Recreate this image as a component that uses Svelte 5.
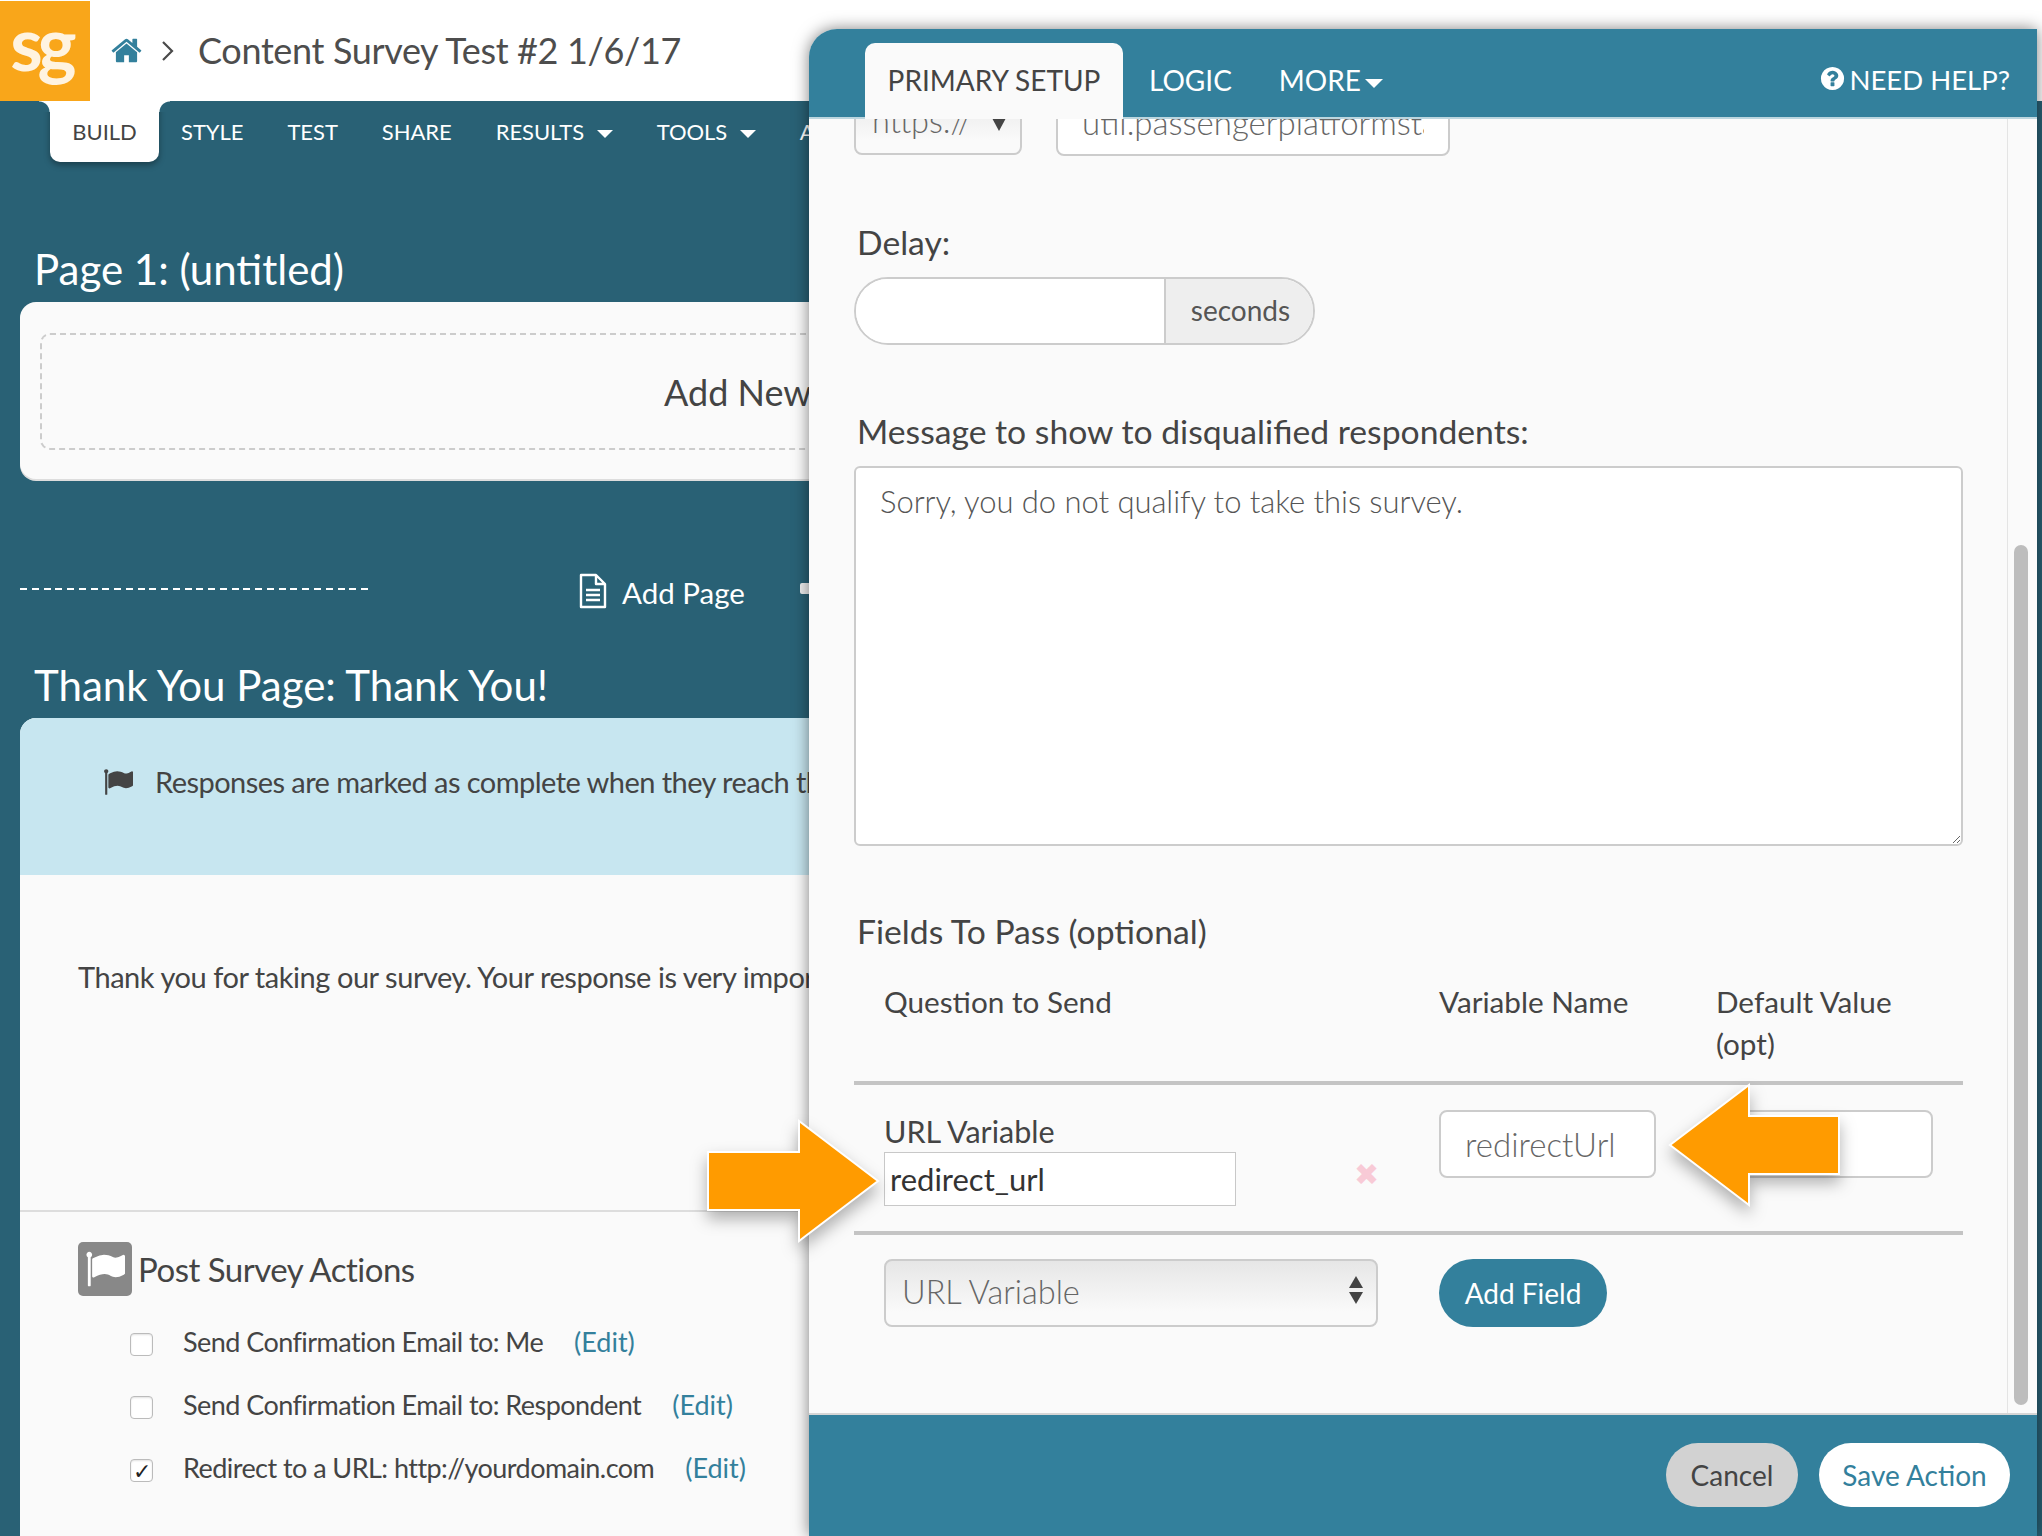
<script>
  const tabs = [
    { label: "BUILD", active: true },
    { label: "STYLE" },
    { label: "TEST" },
    { label: "SHARE" },
    { label: "RESULTS", caret: true },
    { label: "TOOLS", caret: true },
    { label: "ADVANCED" }
  ];

  const actions = [
    { label: "Send Confirmation Email to: Me", checked: false },
    { label: "Send Confirmation Email to: Respondent", checked: false },
    { label: "Redirect to a URL: http://yourdomain.com", checked: true }
  ];

  const flagPath =
    "M320 256q0 72-64 110v1266q0 13-9.500 22.500t-22.500 9.500h-64q-13 0-22.500-9.500t-9.500-22.500v-1266q-64-38-64-110 0-53 37.500-90.500t90.500-37.500 90.500 37.500 37.500 90.500zm1472 64v763q0 25-12.500 38.500t-39.500 27.500q-215 116-369 116-61 0-123.500-22t-108.500-48-115.500-48-142.500-22q-192 0-464 146-17 9-33 9-26 0-45-19t-19-45v-742q0-32 31-55 21-14 79-43 236-120 421-120 107 0 200 29t219 88q38 19 88 19 54 0 117.500-21t110-47 88-47 54.500-21q26 0 45 19t19 45z";
</script>

<div class="screen">
  <header class="topbar">
    <div class="logo">sg</div>
    <svg class="home" viewBox="0 0 1792 1792" aria-hidden="true">
      <path d="M1472 992v480q0 26-19 45t-45 19h-384v-384h-256v384h-384q-26 0-45-19t-19-45v-480q0-1 .5-3t.5-3l575-474 575 474q1 2 1 6zm223-69l-62 74q-8 9-21 11h-3q-13 0-21-7l-692-577-692 577q-12 8-24 7-13-2-21-11l-62-74q-8-10-7-23.500t11-21.500l719-599q32-26 76-26t76 26l244 204v-195q0-14 9-23t23-9h192q14 0 23 9t9 23v408l219 182q10 8 11 21.500t-7 23.500z" />
    </svg>
    <svg class="chevron" viewBox="0 0 14 22" aria-hidden="true">
      <path d="M2 2l9 9-9 9" fill="none" stroke="#4a4a4a" stroke-width="2.200" />
    </svg>
    <h1>Content Survey Test #2 1/6/17</h1>
  </header>

  <main class="builder">
    <nav class="tabs">
      {#each tabs as tab}
        <span class="tab" class:active={tab.active}>
          {tab.label}
          {#if tab.caret}<i class="caret"></i>{/if}
        </span>
      {/each}
    </nav>

    <h2 class="page-title first">Page 1: (untitled)</h2>
    <section class="card">
      <div class="dropzone">Add New Question</div>
    </section>

    <div class="page-actions">
      <div class="dotted"></div>
      <span class="add-page">
        <svg viewBox="0 0 28 36" aria-hidden="true">
          <path d="M2 2h15l9 9v23H2zM17 2v9h9M7 17h14M7 22h14M7 27h14" fill="none" stroke="#fff" stroke-width="2.400" stroke-linejoin="round" />
        </svg>
        Add Page
      </span>
      <span class="add-other"></span>
    </div>

    <h2 class="page-title second">Thank You Page: Thank You!</h2>
    <section class="card thanks">
      <div class="notice">
        <svg viewBox="0 0 1792 1792" aria-hidden="true"><path d={flagPath} fill="#444" /></svg>
        <span>Responses are marked as complete when they reach this page of the survey.</span>
      </div>
      <p class="thanks-text">Thank you for taking our survey. Your response is very important to us.</p>
      <div class="post-actions">
        <div class="post-head">
          <span class="flag-box">
            <svg viewBox="0 0 1792 1792" aria-hidden="true"><path d={flagPath} fill="#fff" /></svg>
          </span>
          Post Survey Actions
        </div>
        {#each actions as action}
          <div class="action">
            <span class="check">{#if action.checked}✓{/if}</span>
            <span class="action-label">{action.label}</span>
            <span class="edit">(Edit)</span>
          </div>
        {/each}
      </div>
    </section>
  </main>

  <aside class="modal">
    <div class="modal-head">
      <span class="modal-tab active">PRIMARY SETUP</span>
      <span class="modal-tab">LOGIC</span>
      <span class="modal-tab more">MORE<i class="caret big"></i></span>
      <span class="help">
        <svg viewBox="0 0 1792 1792" aria-hidden="true">
          <path d="M1024 1376v-192q0-14-9-23t-23-9h-192q-14 0-23 9t-9 23v192q0 14 9 23t23 9h192q14 0 23-9t9-23zm256-672q0-88-55.500-163t-138.500-116-170-41q-243 0-371 213-15 24 8 42l132 100q7 6 19 6 16 0 25-12 53-68 86-92 34-24 86-24 48 0 85.500 26t37.500 59q0 38-20 61t-68 45q-63 28-115.500 86.500t-52.500 125.500v36q0 14 9 23t23 9h192q14 0 23-9t9-23q0-19 21.500-49.500t54.500-49.500q32-18 49-28.500t46-35 44.500-48 28-60.500 12.500-81zm384 192q0 209-103 385.500t-279.500 279.500-385.500 103-385.500-103-279.500-279.500-103-385.500 103-385.500 279.500-279.500 385.500-103 385.500 103 279.500 279.500 103 385.500z" fill="#fff" />
        </svg>
        NEED HELP?
      </span>
    </div>

    <div class="modal-body">
      <div class="scroll-area">
        <div class="url-row">
          <div class="fake-select proto">https://<i class="down"></i></div>
          <input class="text-input host" value="util.passengerplatformstage.com" readonly />
        </div>

        <label class="field-label delay-label" for="delay">Delay:</label>
        <div class="input-group">
          <input id="delay" readonly />
          <span class="addon">seconds</span>
        </div>

        <label class="field-label msg-label" for="msg">Message to show to disqualified respondents:</label>
        <textarea id="msg" readonly>Sorry, you do not qualify to take this survey.</textarea>

        <div class="field-label fields-label">Fields To Pass (optional)</div>
        <div class="fields-grid head">
          <span>Question to Send</span>
          <span>Variable Name</span>
          <span class="default-col">Default Value (opt)</span>
        </div>
        <div class="fields-grid row">
          <div class="question">
            URL Variable
            <input class="plain-input" value="redirect_url" readonly />
          </div>
          <span class="remove">✖</span>
          <input class="text-input var" value="redirectUrl" readonly />
          <input class="text-input def" readonly />
        </div>
        <div class="add-row">
          <div class="fake-select question-select">
            URL Variable
            <span class="updown"><i></i><i></i></span>
          </div>
          <span class="pill teal">Add Field</span>
        </div>
      </div>
      <div class="scrollbar"><div class="thumb"></div></div>
    </div>

    <div class="modal-foot">
      <span class="pill cancel">Cancel</span>
      <span class="pill save">Save Action</span>
    </div>
  </aside>

  <!-- callout arrows drawn on top of the screenshot -->
  <svg class="arrow arrow-right" viewBox="0 0 176 124" aria-hidden="true">
    <path d="M2 33h91V2l79 60-79 60V91H2z" />
  </svg>
  <svg class="arrow arrow-left" viewBox="0 0 176 124" aria-hidden="true">
    <path d="M171 33H81V2L2 62l79 60V91h90z" />
  </svg>
</div>

<style>
  :global(body) {
    margin: 0;
    background: #fff;
  }

  .screen {
    position: relative;
    width: 2042px;
    height: 1536px;
    overflow: hidden;
    font-family: Lato, "Liberation Sans", sans-serif;
    color: #444;
    background: #fff;
  }

  .topbar {
    display: flex;
    align-items: center;
    height: 101px;
  }
  .logo {
    width: 90px;
    height: 100px;
    margin-top: 1px;
    background: #f9a61a;
    color: #fff3e0;
    font-size: 74px;
    font-weight: 700;
    line-height: 84px;
    text-align: center;
    letter-spacing: -5px;
    box-sizing: border-box;
    padding-right: 8px;
  }
  .home {
    width: 33px;
    height: 33px;
    margin-left: 20px;
    fill: #33809c;
  }
  .chevron {
    width: 14px;
    height: 22px;
    margin-left: 18px;
  }
  h1 {
    margin: 0 0 2px 23px;
    font-size: 36px;
    font-weight: 400;
    letter-spacing: -0.35px;
    color: #4d4d4d;
  }

  .builder {
    height: 1435px;
    background: #296175;
    overflow: hidden;
    padding: 0 0 0 20px;
  }

  .tabs {
    display: flex;
    align-items: flex-start;
    height: 61px;
    margin-left: 30px;
    white-space: nowrap;
    font-size: 22px;
    letter-spacing: -0.05px;
    color: #fff;
  }
  .tab {
    padding: 18px 22px 0;
    line-height: 26px;
  }
  .tab.active {
    position: relative;
    width: 109px;
    height: 61px;
    box-sizing: border-box;
    padding: 18px 0 0;
    text-align: center;
    background: #fff;
    color: #444;
    border-radius: 0 0 10px 10px;
    box-shadow: 0 3px 6px rgba(0, 0, 0, 0.35);
  }
  /* flared corners where the active tab meets the white header */
  .tab.active::before,
  .tab.active::after {
    content: "";
    position: absolute;
    top: 0;
    width: 11px;
    height: 11px;
  }
  .tab.active::before {
    left: -11px;
    background: radial-gradient(circle at 0 100%, #296175 10px, #fff 11px);
  }
  .tab.active::after {
    right: -11px;
    background: radial-gradient(circle at 100% 100%, #296175 10px, #fff 11px);
  }
  .caret {
    display: inline-block;
    margin-left: 7px;
    vertical-align: middle;
    border-style: solid;
    border-width: 8px 8px 0;
    border-color: #fff transparent transparent;
  }
  .caret.big {
    margin-left: 4px;
    border-width: 9px 9px 0;
  }

  .page-title {
    margin: 0;
    font-size: 42px;
    font-weight: 400;
    color: #fff;
    padding-left: 14px;
    line-height: 50px;
  }
  .page-title.first {
    margin-top: 82px;
    height: 58px;
  }
  .page-title.second {
    margin-top: 50px;
    height: 58px;
  }

  .card {
    width: 2000px;
    background: #fafafa;
    border-radius: 16px;
    box-sizing: border-box;
  }
  .card:not(.thanks) {
    height: 177px;
    padding: 31px 20px 0;
    box-shadow: 0 2px 0 #ddd;
  }
  .dropzone {
    height: 117px;
    border: 2px dashed #ccc;
    border-radius: 10px;
    box-sizing: border-box;
    padding: 35px 0 0 622px;
    font-size: 36px;
    line-height: 44px;
    color: #444;
    white-space: nowrap;
  }

  .page-actions {
    display: flex;
    align-items: flex-start;
    height: 43px;
    padding-top: 88px;
    color: #fff;
  }
  .dotted {
    width: 348px;
    height: 2px;
    margin-top: 21px;
    background: repeating-linear-gradient(90deg, #fff 0 7px, transparent 7px 11.760px);
  }
  .add-page {
    display: flex;
    align-items: center;
    margin: 4px 0 0 210px;
    gap: 14px;
    font-size: 29.500px;
    line-height: 44px;
  }
  .add-page svg {
    width: 30px;
    height: 36px;
    margin-top: -4px;
  }
  .add-other {
    width: 12px;
    height: 11px;
    margin: 16px 0 0 55px;
    background: #eee;
    border-radius: 2px;
  }

  .card.thanks {
    height: 900px;
    overflow: hidden;
  }
  .notice {
    display: flex;
    align-items: flex-start;
    height: 157px;
    padding: 46px 0 0 83px;
    box-sizing: border-box;
    background: #c7e6f0;
    font-size: 29px;
    line-height: 36px;
    letter-spacing: -0.55px;
    white-space: nowrap;
  }
  .notice svg {
    width: 30px;
    height: 30px;
    margin: 3px 22px 0 0;
  }
  .thanks-text {
    height: 335px;
    margin: 0;
    padding: 84px 0 0 58px;
    box-sizing: border-box;
    font-size: 29px;
    line-height: 36px;
    letter-spacing: -0.45px;
    white-space: nowrap;
  }
  .post-actions {
    border-top: 2px solid #ddd;
    padding: 30px 0 0 58px;
  }
  .post-head {
    display: flex;
    align-items: center;
    gap: 6px;
    font-size: 33px;
    letter-spacing: -0.5px;
    height: 54px;
    margin-bottom: 14px;
  }
  .flag-box {
    display: flex;
    align-items: center;
    justify-content: center;
    width: 54px;
    height: 54px;
    background: #888;
    border-radius: 5px;
  }
  .flag-box svg {
    width: 40px;
    height: 42px;
  }
  .action {
    display: flex;
    align-items: center;
    height: 63px;
    padding-left: 52px;
    font-size: 27px;
    letter-spacing: -0.55px;
  }
  .check {
    width: 23px;
    height: 23px;
    margin: 5px 30px 0 0;
    box-sizing: border-box;
    border: 1px solid #bbb;
    border-radius: 4px;
    background: #fff;
    font-size: 22px;
    line-height: 22px;
    text-align: center;
    color: #222;
    box-shadow: inset 0 1px 2px rgba(0, 0, 0, 0.12);
  }
  .edit {
    margin-left: 31px;
    letter-spacing: 0;
    color: #33809c;
  }

  .modal {
    position: absolute;
    left: 809px;
    top: 29px;
    width: 1228px;
    height: 1507px;
    display: flex;
    flex-direction: column;
    border-radius: 28px 0 0 0;
    overflow: hidden;
    background: #fafafa;
    box-shadow: 0 0 16px rgba(0, 0, 0, 0.5);
  }
  .modal-head {
    display: flex;
    align-items: flex-start;
    height: 90px;
    flex: none;
    box-sizing: border-box;
    padding: 14px 27px 0 56px;
    background: #33809c;
    border-bottom: 2px solid #bcd6df;
    color: #fff;
    font-size: 28px;
    position: relative;
    z-index: 1;
  }
  .modal-tab {
    padding: 19px 0 0;
    margin-right: 47px;
    line-height: 36px;
    white-space: nowrap;
  }
  .modal-tab.active {
    width: 258px;
    height: 76px;
    box-sizing: border-box;
    margin-right: 26px;
    text-align: center;
    background: #fafafa;
    color: #444;
    border-radius: 10px 10px 0 0;
  }
  .help {
    display: flex;
    align-items: center;
    gap: 3px;
    margin-left: auto;
    padding-top: 19px;
    font-size: 27.500px;
    line-height: 36px;
    white-space: nowrap;
  }
  .help svg {
    width: 27px;
    height: 27px;
    margin-top: -4px;
  }

  .modal-body {
    flex: 1;
    display: flex;
    overflow: hidden;
    min-height: 0;
  }
  .scroll-area {
    flex: none;
    width: 1199px;
    box-sizing: border-box;
    padding: 0 45px;
    border-right: 1px solid #e4e4e4;
  }
  .scrollbar {
    flex: 1;
    padding: 426px 9px 0 6px;
  }
  .thumb {
    height: 860px;
    background: #bdbdbd;
    border-radius: 7px;
  }

  .url-row {
    display: flex;
    gap: 34px;
    height: 68px;
    margin-top: -31px;
  }
  .fake-select {
    position: relative;
    box-sizing: border-box;
    border: 2px solid #ccc;
    border-radius: 8px;
    background: linear-gradient(#e6e6e6, #fafafa 80%);
    color: #666;
    font-size: 32.500px;
    font-weight: 300;
    line-height: 62px;
    padding-left: 16px;
  }
  .proto {
    width: 168px;
    height: 67px;
  }
  .down {
    position: absolute;
    right: 14px;
    top: 28px;
    border-style: solid;
    border-width: 13px 7px 0;
    border-color: #444 transparent transparent;
  }
  .text-input {
    box-sizing: border-box;
    height: 68px;
    border: 2px solid #ccc;
    border-radius: 8px;
    background: #fff;
    font: 300 33px Lato, sans-serif;
    color: #666;
    padding: 0 24px;
    outline: none;
    margin: 0;
  }
  .host {
    width: 394px;
  }

  .field-label {
    display: block;
    font-size: 33.700px;
    line-height: 40px;
    color: #444;
    padding-left: 3px;
  }
  .delay-label {
    margin-top: 66px;
  }
  .input-group {
    display: flex;
    width: 461px;
    height: 68px;
    margin-top: 15px;
    box-sizing: border-box;
    border: 2px solid #ccc;
    border-radius: 34px;
    overflow: hidden;
    background: #fff;
  }
  .input-group input {
    flex: 1;
    min-width: 0;
    border: none;
    outline: none;
    background: #fff;
  }
  .addon {
    width: 149px;
    box-sizing: border-box;
    border-left: 2px solid #ccc;
    background: #eee;
    font-size: 28px;
    line-height: 63px;
    text-align: center;
    padding-left: 2px;
    color: #555;
  }
  .msg-label {
    margin-top: 66px;
  }
  textarea {
    display: block;
    box-sizing: border-box;
    width: 1109px;
    height: 380px;
    margin-top: 15px;
    border: 2px solid #ccc;
    border-radius: 6px;
    background: #fff;
    padding: 13px 24px;
    font: 300 31px/40px Lato, sans-serif;
    letter-spacing: -0.05px;
    color: #555;
    outline: none;
  }
  .fields-label {
    margin-top: 65px;
  }
  .fields-grid {
    display: grid;
    box-sizing: content-box;
    width: 1079px;
    padding-left: 30px;
  }
  .fields-grid.head {
    grid-template-columns: 555px 277px 1fr;
    height: 100px;
    margin-top: 30px;
    border-bottom: 4px solid #c4c4c4;
    font-size: 29.700px;
    line-height: 42px;
  }
  .default-col {
    width: 190px;
  }
  .fields-grid.row {
    grid-template-columns: 472px 83px 217px 1fr;
    height: 146px;
    border-bottom: 4px solid #c4c4c4;
  }
  .question {
    padding-top: 26px;
    font-size: 30.500px;
    line-height: 41px;
  }
  .plain-input {
    display: block;
    box-sizing: border-box;
    width: 352px;
    height: 54px;
    margin: 0;
    padding: 0 5px;
    border: 1px solid #c8c8c8;
    background: #fff;
    font: 400 31px Lato, sans-serif;
    color: #333;
    outline: none;
  }
  .remove {
    color: #f8cad6;
    font-family: "DejaVu Sans", sans-serif;
    font-size: 30px;
    line-height: 34px;
    padding: 73px 0 0 0;
    margin-left: -2px;
  }
  .var {
    width: 217px;
    margin-top: 25px;
  }
  .def {
    width: 217px;
    margin: 25px 0 0 60px;
  }
  .add-row {
    display: flex;
    gap: 61px;
    margin-top: 24px;
    padding-left: 30px;
  }
  .question-select {
    width: 494px;
    height: 68px;
    border-radius: 8px;
  }
  .updown {
    position: absolute;
    right: 13px;
    top: 15px;
    display: flex;
    flex-direction: column;
    gap: 4px;
  }
  .updown i {
    border-style: solid;
    border-width: 0 7px 12px;
    border-color: transparent transparent #444;
  }
  .updown i + i {
    border-width: 12px 7px 0;
    border-color: #444 transparent transparent;
  }
  .pill {
    display: inline-flex;
    align-items: center;
    justify-content: center;
    height: 64px;
    border-radius: 32px;
    font-size: 28px;
    white-space: nowrap;
  }
  .teal {
    width: 168px;
    height: 68px;
    border-radius: 34px;
    background: #33809c;
    color: #fff;
  }
  .modal-foot {
    display: flex;
    flex: none;
    justify-content: flex-end;
    gap: 21px;
    height: 123px;
    box-sizing: border-box;
    padding: 28px 27px 0 0;
    background: #33809c;
    border-top: 2px solid #d5d5d5;
  }
  .cancel {
    width: 132px;
    background: #d2d2d2;
    color: #444;
  }
  .save {
    width: 191px;
    background: #fff;
    color: #33809c;
  }

  .arrow {
    position: absolute;
    width: 176px;
    height: 124px;
    overflow: visible;
    filter: drop-shadow(0 8px 8px rgba(0, 0, 0, 0.3));
  }
  .arrow path {
    fill: #ff9b00;
    stroke: #fff;
    stroke-width: 2;
  }
  .arrow-right {
    left: 706px;
    top: 1119px;
  }
  .arrow-left {
    left: 1668px;
    top: 1083px;
  }
</style>
